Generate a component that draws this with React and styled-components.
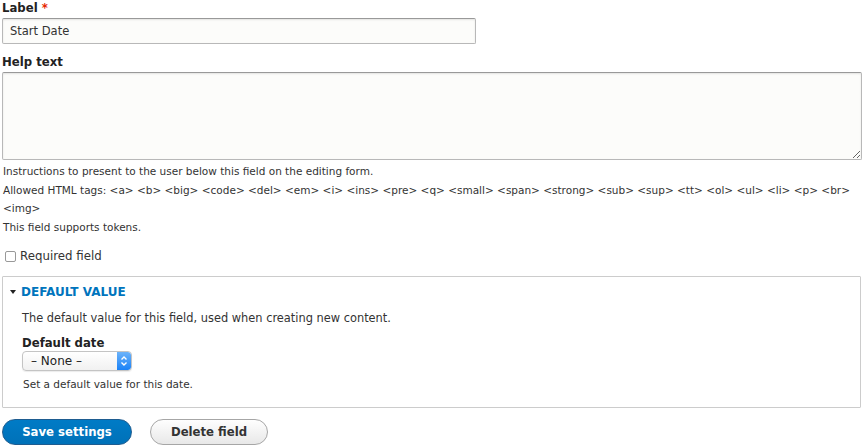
import styled, { createGlobalStyle } from "styled-components";

const Global = createGlobalStyle`
  html, body {
    margin: 0;
    padding: 0;
    background: #fff;
  }
  body {
    font-family: "DejaVu Sans", "Liberation Sans", sans-serif;
    color: #222;
  }
`;

const Page = styled.form`
  display: flex;
  flex-direction: column;
  padding: 0 2px;
`;

const Field = styled.div`
  display: flex;
  flex-direction: column;
  margin-bottom: ${(p) => p.$gap || 0}px;
`;

const Label = styled.label`
  font-size: 11.7px;
  font-weight: bold;
  line-height: 16px;
  margin-bottom: ${(p) => (p.$tight ? 0 : 2)}px;
  color: #222;
`;

const Star = styled.span`
  color: #e62600;
  margin-left: 4px;
`;

const TextInput = styled.input`
  box-sizing: border-box;
  width: 474px;
  height: 26px;
  padding: 0 7px;
  border: 1px solid #b8b8b8;
  border-top-color: #999;
  border-radius: 2px;
  background: #fcfcfa;
  box-shadow: inset 0 1px 2px rgba(0, 0, 0, 0.1);
  font-family: inherit;
  font-size: 11.5px;
  color: #333;
`;

const TextArea = styled.textarea`
  box-sizing: border-box;
  width: 860px;
  height: 88px;
  border: 1px solid #b8b8b8;
  border-top-color: #999;
  border-radius: 2px;
  background: #fcfcfa;
  box-shadow: inset 0 1px 2px rgba(0, 0, 0, 0.1);
  resize: vertical;
  font-family: inherit;
`;

const Desc = styled.div`
  font-size: 10.5px;
  line-height: 18.6px;
  color: #333;
  padding-left: 1px;
  margin-top: ${(p) => p.$top || 0}px;
`;

const CheckRow = styled.label`
  display: flex;
  align-items: center;
  gap: 4px;
  font-size: 11.8px;
  color: #333;
  margin: 13px 0 13px 3px;
`;

const Check = styled.span`
  width: 9px;
  height: 9px;
  border: 1px solid #999;
  border-radius: 2px;
  background: #fff;
`;

const Details = styled.section`
  box-sizing: border-box;
  width: 859px;
  border: 1px solid #ccc;
  border-radius: 1px;
  padding: 7px 0 13px;
`;

const Summary = styled.div`
  display: flex;
  align-items: center;
  gap: 5px;
  padding-left: 7px;
  font-size: 12px;
  font-weight: bold;
  color: #0074bd;
  text-transform: uppercase;
  line-height: 16px;
`;

const Triangle = styled.span`
  width: 0;
  height: 0;
  border-left: 3px solid transparent;
  border-right: 3px solid transparent;
  border-top: 4px solid #222;
`;

const DetailsBody = styled.div`
  display: flex;
  flex-direction: column;
  padding: 10px 0 0 19px;
`;

const BodyText = styled.div`
  font-size: 11.4px;
  color: #333;
  line-height: 16px;
  margin-bottom: 9px;
`;

const Select = styled.div`
  box-sizing: border-box;
  display: flex;
  align-items: center;
  justify-content: space-between;
  width: 110px;
  height: 20px;
  border: 1px solid #c4c4c4;
  border-radius: 4px;
  background: linear-gradient(#fff, #f1f1f1);
  box-shadow: 0 1px 1px rgba(0, 0, 0, 0.08);
  padding-left: 8px;
  font-size: 12px;
  color: #222;
  overflow: hidden;
`;

const SelectArrows = styled.span`
  display: flex;
  align-items: center;
  justify-content: center;
  width: 14px;
  height: 100%;
  background: linear-gradient(#6cb3fa, #1a82f7);
  border-radius: 0 3px 3px 0;
`;

const Actions = styled.div`
  display: flex;
  gap: 18px;
  margin-top: 11px;
`;

const Button = styled.button`
  box-sizing: border-box;
  height: 26px;
  width: ${(p) => p.$width}px;
  border-radius: 13px;
  font-family: inherit;
  font-size: 11.7px;
  font-weight: bold;
  cursor: pointer;
  border: 1px solid ${(p) => (p.$primary ? "#1e5c90" : "#a6a6a6")};
  color: ${(p) => (p.$primary ? "#fff" : "#333")};
  background: ${(p) =>
    p.$primary
      ? "linear-gradient(#007bc6, #0071b8)"
      : "linear-gradient(#fefefe, #e8e8e8)"};
`;

export default function App() {
  return (
    <>
      <Global />
      <Page>
        <Field $gap={10}>
          <Label>
            Label<Star>*</Star>
          </Label>
          <TextInput defaultValue="Start Date" />
        </Field>
        <Field>
          <Label>Help text</Label>
          <TextArea />
        </Field>
        <Desc $top={2}>
          Instructions to present to the user below this field on the editing form.
          <br />
          Allowed HTML tags: &lt;a&gt; &lt;b&gt; &lt;big&gt; &lt;code&gt; &lt;del&gt; &lt;em&gt;
          &lt;i&gt; &lt;ins&gt; &lt;pre&gt; &lt;q&gt; &lt;small&gt; &lt;span&gt; &lt;strong&gt;
          &lt;sub&gt; &lt;sup&gt; &lt;tt&gt; &lt;ol&gt; &lt;ul&gt; &lt;li&gt; &lt;p&gt; &lt;br&gt;
          <br />
          &lt;img&gt;
          <br />
          This field supports tokens.
        </Desc>
        <CheckRow>
          <Check />
          Required field
        </CheckRow>
        <Details>
          <Summary>
            <Triangle />
            Default value
          </Summary>
          <DetailsBody>
            <BodyText>The default value for this field, used when creating new content.</BodyText>
            <Label $tight>Default date</Label>
            <Select>
              – None –
              <SelectArrows>
                <svg width="8" height="12" viewBox="0 0 8 12">
                  <path d="M1.5 4.5 L4 2 L6.5 4.5 M1.5 7.5 L4 10 L6.5 7.5" fill="none" stroke="#fff" strokeWidth="1.4" />
                </svg>
              </SelectArrows>
            </Select>
            <Desc $top={4}>Set a default value for this date.</Desc>
          </DetailsBody>
        </Details>
        <Actions>
          <Button type="button" $primary $width={130}>Save settings</Button>
          <Button type="button" $width={118}>Delete field</Button>
        </Actions>
      </Page>
    </>
  );
}
